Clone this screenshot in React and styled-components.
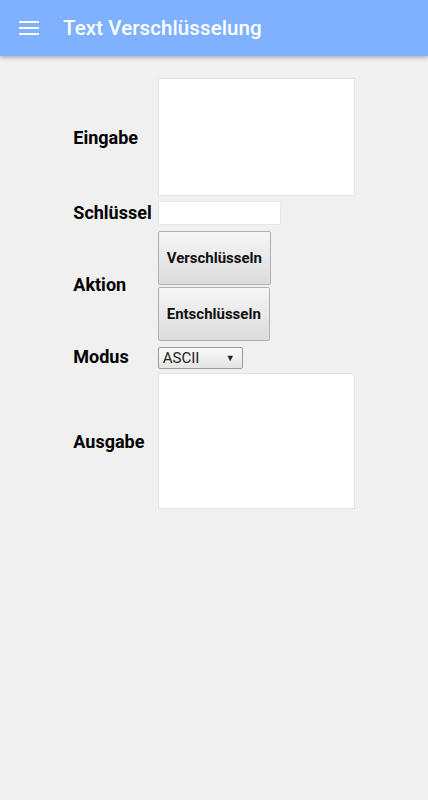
import React from 'react';
import styled, { createGlobalStyle } from 'styled-components';

const GlobalStyle = createGlobalStyle`
  html, body {
    margin: 0;
    padding: 0;
    background: #f0f0f0;
    font-family: Roboto, "Noto Sans", sans-serif;
  }
`;

const Page = styled.div`
  min-height: 800px;
  background: #f0f0f0;
`;

const AppBar = styled.header`
  height: 56px;
  background: #80b1ff;
  display: flex;
  align-items: center;
  box-shadow: 0 2px 4px rgba(0, 0, 0, 0.25);
  position: relative;
`;

const MenuButton = styled.button`
  width: 20px;
  height: 20px;
  margin-left: 19px;
  padding: 0;
  border: none;
  background: transparent;
  display: flex;
  flex-direction: column;
  justify-content: center;
  gap: 4px;
`;

const MenuLine = styled.span`
  display: block;
  height: 2px;
  width: 20px;
  background: #fff;
`;

const Title = styled.h1`
  margin: 0 0 0 24px;
  font-size: 20.5px;
  font-weight: 500;
  color: #fff;
  letter-spacing: 0.1px;
`;

const Form = styled.div`
  display: grid;
  grid-template-columns: auto auto;
  justify-content: center;
  column-gap: 6px;
  padding-top: 22px;
`;

const Label = styled.div`
  font-size: 18px;
  font-weight: 700;
  color: #000;
  align-self: center;
  margin-top: ${p => p.offset || 0}px;
`;

const Cell = styled.div`
  display: flex;
  flex-direction: column;
  align-items: flex-start;
  gap: 2px;
  margin-top: ${p => p.gap || 0}px;
`;

const TextArea = styled.textarea`
  box-sizing: border-box;
  width: 197px;
  height: ${p => p.h}px;
  margin: 0;
  border: 1px solid #e2e2e2;
  background: #fff;
  resize: none;
  font-family: Roboto, sans-serif;
  outline: none;
`;

const TextInput = styled.input`
  box-sizing: border-box;
  width: 123px;
  height: 24px;
  margin: 0;
  border: 1px solid #e6e6e6;
  background: #fff;
  outline: none;
`;

const ActionButton = styled.button`
  box-sizing: border-box;
  height: ${p => p.h}px;
  padding: 0 8px;
  margin: 0;
  border: 1px solid #b0b0b0;
  border-radius: 2px;
  background: linear-gradient(#f6f6f6, #dcdcdc);
  font-family: Roboto, sans-serif;
  font-size: 15px;
  font-weight: 700;
  color: #111;
`;

const SelectBox = styled.div`
  box-sizing: border-box;
  width: 85px;
  height: 22px;
  border: 1px solid #9c9c9c;
  border-radius: 2px;
  background: linear-gradient(#fafafa, #e4e4e4);
  display: flex;
  align-items: center;
  justify-content: space-between;
  padding: 0 7px 0 4px;
  font-size: 15px;
  color: #222;
`;

const Caret = styled.span`
  font-size: 9px;
  color: #222;
`;

export default function App() {
  return (
    <Page>
      <GlobalStyle />
      <AppBar>
        <MenuButton aria-label="Menü">
          <MenuLine />
          <MenuLine />
          <MenuLine />
        </MenuButton>
        <Title>Text Verschlüsselung</Title>
      </AppBar>
      <Form>
        <Label>Eingabe</Label>
        <Cell>
          <TextArea h={118} />
        </Cell>

        <Label offset={4}>Schlüssel</Label>
        <Cell gap={5}>
          <TextInput type="text" />
        </Cell>

        <Label offset={3}>Aktion</Label>
        <Cell gap={6}>
          <ActionButton h={54}>Verschlüsseln</ActionButton>
          <ActionButton h={54}>Entschlüsseln</ActionButton>
        </Cell>

        <Label offset={3}>Modus</Label>
        <Cell gap={6}>
          <SelectBox>
            <span>ASCII</span>
            <Caret>▼</Caret>
          </SelectBox>
        </Cell>

        <Label offset={4}>Ausgabe</Label>
        <Cell gap={4}>
          <TextArea h={136} />
        </Cell>
      </Form>
    </Page>
  );
}
